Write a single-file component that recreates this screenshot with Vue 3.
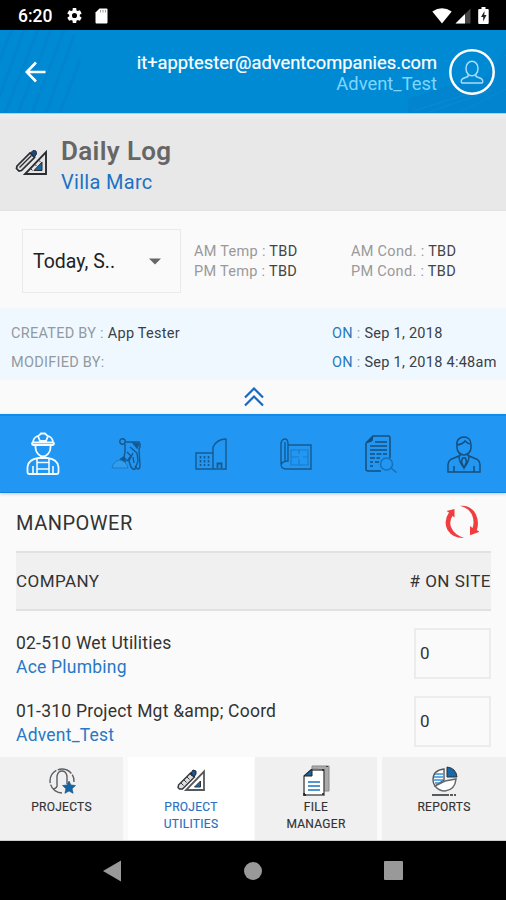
<script setup>
import { ref } from 'vue'

const weather = [
  { label: 'AM Temp', value: 'TBD' },
  { label: 'AM Cond.', value: 'TBD' },
  { label: 'PM Temp', value: 'TBD' },
  { label: 'PM Cond.', value: 'TBD' },
]
const rows = ref([
  { code: '02-510 Wet Utilities', company: 'Ace Plumbing', count: 0 },
  { code: '01-310 Project Mgt &amp; Coord', company: 'Advent_Test', count: 0 },
])
const perforations = [0, 1, 2, 3]
</script>

<template>
  <div class="screen">
    <div class="status">
      <span class="clock">6:20</span>
      <svg class="gear" width="17" height="17" viewBox="0 0 24 24"><path fill="#fff" fill-rule="evenodd" d="M19.400 13a7.500 7.500 0 0 0 0-2l2.800-2-2.600-4.500-3.100 1.300a7.700 7.700 0 0 0-1.700-1L14.400 1.500H9.600l-.4 3.300a7.700 7.700 0 0 0-1.700 1L4.400 4.500 1.800 9l2.800 2a7.500 7.500 0 0 0 0 2l-2.800 2 2.600 4.500 3.100-1.300a7.700 7.700 0 0 0 1.700 1l.4 3.300h4.800l.4-3.300a7.700 7.700 0 0 0 1.700-1l3.100 1.300 2.600-4.500zM12 15.600a3.600 3.600 0 1 1 0-7.200 3.600 3.600 0 0 1 0 7.200z"/></svg>
      <svg class="sd" width="13" height="16" viewBox="0 0 13 16"><path fill="#fff" d="M4.500.5h7a1 1 0 0 1 1 1v13a1 1 0 0 1-1 1h-10a1 1 0 0 1-1-1V4.500z"/><path stroke="#999" stroke-width="1" d="M5.500 2v2.500M8 2v2.500M10.500 2v2.500"/></svg>
      <span class="grow"></span>
      <svg width="20" height="16" viewBox="0 0 20 16"><path fill="#fff" d="M.3 3.500Q10-3 19.700 3.500L10 15.500z"/></svg>
      <svg class="cell" width="16" height="16" viewBox="0 0 16 16"><path fill="#444" d="M15.500.5v15H.5z"/><path fill="#fff" d="M10 6v9.500H.5z"/></svg>
      <svg class="battery" width="11" height="17" viewBox="0 0 11 17"><path fill="#fff" d="M3.500 0h4v2H10a1 1 0 0 1 .7 1v13a1 1 0 0 1-1 1h-8.500a1 1 0 0 1-1-1V3a1 1 0 0 1 1-1h2.300z"/><path fill="#222" d="M6.500 4L3 10h2.200v4.500L8.500 8H6.300z"/></svg>
    </div>

    <header class="header">
      <svg class="texture" width="506" height="83" viewBox="0 0 506 83">
        <g fill="none" stroke="#0874c0" stroke-width="3" opacity=".22">
          <path d="M-4 38L12 0M-4 76L24 0M5 83L38 0M18 83L51 0M32 83L64 0M46 83L74 5M60 83L80 30"/>
        </g>
        <path fill="#0878c5" opacity=".3" d="M408 83v-14l48-16 22 2 28-36v64z"/>
        <path stroke="#2497da" opacity=".3" fill="none" d="M414 81l53-17M430 82l62-22M458 83l48-24M486 40l20-15"/>
      </svg>
      <svg class="back" width="22" height="22" viewBox="0 0 22 22"><path fill="none" stroke="#fff" stroke-width="2.600" d="M20.500 11H2.500M11 1.500L1.700 11l9.300 9.500"/></svg>
      <div class="account">
        <div class="email">it+apptester@adventcompanies.com</div>
        <div class="tenant">Advent_Test</div>
      </div>
      <svg class="avatar" width="48" height="48" viewBox="0 0 48 48"><circle cx="24" cy="24" r="21.700" fill="none" stroke="#fff" stroke-width="2.500"/><g fill="none" stroke="#a9dcfa" stroke-width="1.500"><ellipse cx="24" cy="20.500" rx="6" ry="7.300"/><path d="M20 26.500v2l-5.500 2.300q-1.500.8-1.200 3.200.2 1 1.200 1h19q1 0 1.200-1 .3-2.400-1.200-3.200L28 28.500v-2"/></g></svg>
    </header>

    <section class="title">
      <svg class="tools" width="32" height="26" viewBox="0 0 32 26">
        <path d="M2 17L15 4l4.500 4.500L6.500 21.500 4 22 1.500 19.500z" fill="#ddd" stroke="#292c31" stroke-width="1.700"/>
        <path d="M4.500 18.500L16.500 6.500" fill="none" stroke="#292c31" stroke-width="1.300"/>
        <path d="M15.500 4l2.500-2.500 3 .5.500 3-2 3z" fill="#164d83" stroke="#202a38"/>
        <path d="M31 3V25H10z" fill="#e4e4e4" stroke="#292c31" stroke-width="1.900"/>
        <path d="M27 13v8.500h-8z" fill="#1468a8" stroke="#292c31"/>
        <path d="M16 20l1.500 1.500M20 15.500l1.500 1.500M24 11.500l1.500 1.500" stroke="#292c31"/>
      </svg>
      <div class="headings"><h1>Daily Log</h1><div class="project">Villa Marc</div></div>
    </section>

    <section class="filters">
      <div class="select"><span>Today, S..</span><svg width="12" height="7" viewBox="0 0 12 7"><path fill="#666" d="M0 .5h12L6 6.500z"/></svg></div>
      <div class="weather">
        <div v-for="w in weather" :key="w.label"><span>{{ w.label }} : </span><b>{{ w.value }}</b></div>
      </div>
    </section>

    <section class="audit">
      <div class="by"><span>CREATED BY : </span><b>App Tester</b></div>
      <div class="on"><i>ON</i><span> : </span><b>Sep 1, 2018</b></div>
      <div class="by"><span>MODIFIED BY:</span></div>
      <div class="on"><i>ON</i><span> : </span><b>Sep 1, 2018 4:48am</b></div>
    </section>

    <div class="collapse"><svg width="20" height="20" viewBox="0 0 20 20"><path fill="none" stroke="#1769bd" stroke-width="2.200" d="M1 10.500L10 1.500l9 9M1 18.500l9-9 9 9"/></svg></div>

    <nav class="categories">
      <svg width="34" height="44" viewBox="0 0 34 44"><g fill="none" stroke="#f2fbff" stroke-width="1.800"><path d="M7 11Q7 5 13 3.500l2-2h4l2 2Q27 5 27 11M12 4l2 5h6l2-5"/><rect x="6" y="10.500" width="22" height="2.500" rx="1.200"/><path d="M9.500 13v2.500c0 5 4 9 7.500 9s7.500-4 7.500-9V13M12.500 26Q2 27.500 1.500 35v5q0 2 2 2h27q2 0 2-2v-5Q32 27.500 21.500 26z"/><path stroke-width="1.600" d="M11 26v15M23 26v15M11 30.500h12M11 37h12M7 34v7M27 34v7"/></g></svg>
      <svg width="32" height="34" viewBox="0 0 32 34"><path d="M1 31q1-6 7-8 5 0 8 5l1 3z" fill="#329ced" stroke="#187dc8"/><g fill="none" stroke="#17598e" stroke-width="1.400"><circle cx="11.500" cy="4.500" r="2.700"/><path d="M14.500 5H28l1 2v3l-1 2 1 17q0 3-2.500 3L24 29M14 7v8l-1 5-3 2 5 3M16 15l4 4-4 5M19 10l7 6 1 8-3 8q-2 1-4-2l-2-6 4-8M22 20l1 6"/><path d="M22 6l6 1-2 4z" fill="#17598e"/><path d="M10 22l3-2 2 3z" fill="#17598e"/></g></svg>
      <svg width="32" height="34" viewBox="0 0 32 34"><g fill="none" stroke="#17598e" stroke-width="1.400"><path d="M1 32V16h17v16zM18 31V10q4-8 13-8v30H18"/><path stroke-width="1.600" stroke-dasharray="2.500 1.500" d="M5.500 19v10M9.500 19v10M13.500 19v10"/><path stroke-width="1.800" d="M22.500 31v-4.500h4V31"/></g></svg>
      <svg width="32" height="34" viewBox="0 0 32 34"><path d="M8 8h23v24H6q-5 0-5-5V6q1-4 4-4t3 5v17q-6 0-7 4M5 5v19" fill="none" stroke="#17598e" stroke-width="1.400"/><path d="M11 13h17v15H11zM11 20h8M19 13v4M19 22v6M23 20h5" fill="none" stroke="#197dc9" stroke-width="1.200"/></svg>
      <svg width="34" height="38" viewBox="0 0 34 38"><path d="M3 8L10 1h16q1 0 1 2v20M18 36H5q-2 0-2-2V8" fill="none" stroke="#174f7c" stroke-width="1.500"/><path d="M3 8l7-7-1 5z" fill="#174f7c" stroke="#174f7c"/><path d="M12 7h12M7 11h17M7 15h17" stroke="#174f7c" stroke-width="1.600"/><path d="M7 19h17M7 23h10M7 27h3M12 27h4M7 31h3" stroke="#174f7c" stroke-width="1.600" stroke-dasharray="5 1.500"/><g fill="#2196f3" stroke="#1571b8" stroke-width="1.500"><circle cx="23.500" cy="29" r="6"/><path d="M28 33l5.500 4.500"/></g></svg>
      <svg width="34" height="38" viewBox="0 0 34 38"><g fill="none" stroke="#164f7d" stroke-width="1.500"><path d="M10 10v3c0 3 3 7 7 7s7-4 7-7v-3c0-5-3-8-7-8s-8 3-7 8q6-1 8-4 3 3 6 3M13 18v3M21 18v3M13 20.500l-7 3Q1 25 1 30v7h32v-7q0-5-5-6.500l-7-3M12 21q0 6 5 12 5-6 5-12M15.500 23l-1 4 2.500 6 2.500-6-1-4zM7 31v6M27 31v6"/></g></svg>
    </nav>

    <main class="manpower">
      <div class="section-head"><h2>MANPOWER</h2>
        <svg width="34" height="34" viewBox="0 0 34 34"><g fill="#f03e40"><path d="M1.500 6L9.500 4v8.500L7.500 11Q4 16 6 22q3 7.500 13 11Q8 33.500 2.500 25-2 16 4 7.500z"/><path d="M15 .8q11-1 16 8.700 3.500 8 .8 15.500l2.700 1.800-9.500 3.500V21l2.500 2q2.100-6-.1-12Q24.500 3 15 .8z"/></g></svg>
      </div>
      <div class="table-head"><span>COMPANY</span><span class="onsite">#&nbsp;ON&nbsp;SITE</span></div>
      <div v-for="r in rows" :key="r.code" class="row">
        <div class="work"><div class="code">{{ r.code }}</div><div class="company">{{ r.company }}</div></div>
        <div class="count">{{ r.count }}</div>
      </div>
    </main>

    <nav class="tabs">
      <div class="tab">
        <svg width="28" height="30" viewBox="0 0 28 30"><g fill="none" stroke="#5b5e62" stroke-width="1.400"><path stroke-dasharray="15 1.500" d="M14 27A12 12 0 1 1 26 16"/><path d="M5 23q5-1 4-5V10q1-5 5-5t5 5v8"/></g><path d="M21 15l1.900 4 4.600.5-3.400 3.200 1 4.600-4.100-2.300-4.100 2.300 1-4.600-3.400-3.200 4.600-.5z" fill="#1465a6" stroke="#174b74" stroke-width=".6"/></svg>
        <span>PROJECTS</span>
      </div>
      <div class="tab active">
        <svg width="28" height="30" viewBox="0 0 28 30"><path d="M1.500 19L13.500 7l4 4-12 12-3 0-1.500-1.500z" fill="#ddd" stroke="#34373b" stroke-width="1.400"/><path v-for="n in perforations" :key="n" :d="`M${4 + n * 3} ${17 - n * 3}l2.500 2.500`" stroke="#34373b"/><path d="M14 7l2-3 3 1v3l-2 3z" fill="#155b98" stroke="#223"/><path d="M27 5.500V24H9z" fill="#fff" stroke="#55585c" stroke-width="1.800"/><path d="M23.500 15v6h-6z" fill="#1468a8" stroke="#333"/></svg>
        <span>PROJECT<br>UTILITIES</span>
      </div>
      <div class="tab file">
        <svg width="28" height="32" viewBox="0 0 28 32"><path d="M10 1h17v25h-5V6L16 4h-6z" fill="#aaa" stroke="#888"/><path d="M2 11L9 5h13v25H2z" fill="#fff" stroke="#54575a" stroke-width="1.500"/><path d="M2 11L10 4v7z" fill="#16649e" stroke="#222"/><path d="M6 17h12M6 21h12M6 25h12" stroke="#1976c0" stroke-width="1.600"/><path d="M25 1v1M21 4v2M2 28v2h2M20 29h2" stroke="#222" stroke-width="1.500"/></svg>
        <span>FILE<br>MANAGER</span>
      </div>
      <div class="tab">
        <svg width="28" height="32" viewBox="0 0 28 32"><path d="M14 4Q3 5 3 15q0 3 2 6l9-6z" fill="#fff" stroke="#55585c" stroke-width="1.400"/><path d="M5 9h8M4 12h9M4 15h9M5 18h5" stroke="#3290da" stroke-width="1.300"/><path d="M15 16l11-2q-1 11-11 12-6 0-10-5z" fill="#fff" stroke="#66696c" stroke-width="1.500"/><path d="M17 2q9 1 10 10H17z" fill="#1769a8" stroke="#333"/><path d="M2 30h24" stroke="#27292b" stroke-width="1.700" stroke-dasharray="17 1 3 1"/></svg>
        <span>REPORTS</span>
      </div>
    </nav>

    <div class="system-nav">
      <svg width="18" height="22" viewBox="0 0 18 22"><path fill="#999" d="M18 .5v21L0 11z"/></svg>
      <svg width="18" height="18" viewBox="0 0 18 18"><circle cx="9" cy="9" r="9" fill="#999"/></svg>
      <svg width="19" height="19" viewBox="0 0 19 19"><rect width="19" height="19" rx="1" fill="#999"/></svg>
    </div>
  </div>
</template>

<style>
body { margin: 0; background: #fafafa; }
</style>

<style scoped>
* { box-sizing: border-box; }
.screen { width: 506px; height: 900px; overflow: hidden; display: flex; flex-direction: column; background: #fafafa; color: #333; font-family: Roboto, "Liberation Sans", sans-serif; white-space: nowrap; }
svg { display: block; flex: none; }
h1, h2 { margin: 0; }
b, i { font-weight: 400; font-style: normal; }
.status { height: 30px; flex: none; background: #000; color: #fff; display: flex; align-items: center; padding: 1px 17px 0 18px; }
.clock { width: 48px; font-size: 17.500px; font-weight: 500; }
.sd { margin-left: 12px; }
.grow { flex: 1; }
.cell { margin-left: 3px; }
.battery { margin-left: 7px; }
.header { position: relative; height: 84px; flex: none; background: #008ad3; border-bottom: 1px solid #aad2ec; color: #fff; display: flex; align-items: center; padding: 0 10px 0 25px; }
.texture { position: absolute; inset: 0; }
.back, .account, .avatar { position: relative; }
.account { flex: 1; text-align: right; padding: 2px 11px 0 0; font-size: 18.400px; line-height: 21px; }
.email { font-size: 18.300px; -webkit-text-stroke: .2px #fff; }
.tenant { color: #7dd6ff; }
.title { height: 97px; flex: none; background: linear-gradient(#eee, #e8e8e8 7px); border-bottom: 1px solid #e3e3e3; display: flex; align-items: center; padding-left: 15px; }
.headings { padding-left: 14px; padding-top: 8px; }
h1 { font-size: 26px; line-height: 32px; font-weight: 600; letter-spacing: .35px; color: #666; }
.project { color: #1b72c5; font-size: 20px; line-height: 31px; letter-spacing: .3px; }
.filters { height: 97px; flex: none; display: flex; align-items: center; padding-left: 22px; padding-top: 2px; }
.select { width: 159px; height: 64px; border: 1px solid #e9ebeb; display: flex; align-items: center; justify-content: space-between; padding: 2px 19px 0 10px; color: #222; font-size: 19.500px; }
.weather { padding: 2px 0 0 13px; display: grid; grid-template-columns: 157px 120px; font-size: 14.500px; letter-spacing: .3px; line-height: 20px; color: #999; }
.weather b { color: #444; }
.audit { height: 72px; flex: none; background: #f0f8ff; display: grid; grid-template-columns: 321px 1fr; grid-auto-rows: 29px; align-items: center; padding: 11px 0 0 11px; font-size: 14.500px; letter-spacing: .27px; color: #929a9f; }
.audit b { color: #394047; }
.audit i { color: #2878bc; }
.collapse { height: 34px; flex: none; display: flex; justify-content: center; align-items: center; padding-left: 1px; }
.categories { height: 79px; flex: none; background: #2196f3; border-top: 2px solid #118ae8; border-bottom: 1px solid #1484df; box-shadow: 0 1px 3px #b7c5d2; display: grid; grid-template-columns: repeat(6, 1fr); width: 506px; align-items: center; justify-items: center; padding: 0 0 0 1px; }
.manpower { height: 264px; flex: none; padding: 0 15px 0 16px; }
.section-head { height: 58px; display: flex; align-items: center; justify-content: space-between; padding-right: 12px; }
h2 { font-size: 20px; font-weight: 400; letter-spacing: .5px; padding: 1px 0 0; color: #333; }
.table-head { height: 60px; background: #f0f0f0; border-top: 2px solid #dfe1e2; border-bottom: 2px solid #dfe1e2; display: flex; align-items: center; justify-content: space-between; font-size: 17px; letter-spacing: .45px; }
.onsite { letter-spacing: .5px; }
.row { height: 68px; display: flex; align-items: flex-start; justify-content: space-between; padding-top: 17px; }
.work { padding-top: 3px; font-size: 17.500px; letter-spacing: .22px; line-height: 24px; }
.company { color: #2878c5; }
.count { width: 77px; height: 51px; border: 2px solid #ebeded; padding-left: 4px; line-height: 47px; font-size: 17px; }
.tabs { height: 84px; flex: none; display: grid; grid-template-columns: 128px 127px 127px 124px; border-bottom: 1px solid #ccc; }
.tab { margin-right: 5px; background: #f0f0f0; display: flex; flex-direction: column; align-items: center; padding-top: 8px; font-size: 12px; letter-spacing: .28px; line-height: 17px; text-align: center; -webkit-text-stroke: .15px; }
.tab svg { height: 32px; margin-bottom: 2px; }
.tab.active { margin-right: 1px; background: #fff; color: #276fc1; }
.tab:last-child { margin-right: 0; }
.system-nav { flex: 1; background: #000; display: flex; align-items: center; justify-content: space-between; padding: 0 103px; }
</style>
